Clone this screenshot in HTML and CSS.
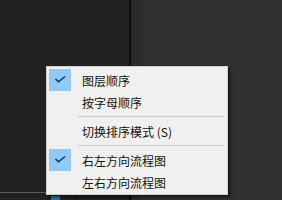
FILE: index.html
```html
<!DOCTYPE html>
<html lang="zh">
<head>
    <meta charset="UTF-8">
    <title>排序菜单</title>
    <link rel="stylesheet" href="styles.css">
</head>
<body>

<div class="workspace">
    <div class="panel-left">
        <div class="spacer"></div>
        <div class="bottom-line"></div>
        <div class="bottom-strip">
            <span class="chip"></span>
            <span class="tick"></span>
        </div>
    </div>
    <div class="divider"></div>
    <div class="band"></div>
    <div class="panel-right"></div>
</div>

<div class="menu">
    <div class="item">
        <span class="check on">
            <svg width="22" height="22" viewBox="0 0 22 22"><polyline points="6.5,10 9.5,12.8 16,7.5" fill="none" stroke="#1c3350" stroke-width="1.6"/></svg>
        </span>
        <span class="label">图层顺序</span>
    </div>
    <div class="item">
        <span class="check"></span>
        <span class="label">按字母顺序</span>
    </div>
    <div class="sep"></div>
    <div class="item">
        <span class="check"></span>
        <span class="label">切换排序模式 (S)</span>
    </div>
    <div class="sep"></div>
    <div class="item">
        <span class="check on">
            <svg width="22" height="22" viewBox="0 0 22 22"><polyline points="6.5,10 9.5,12.8 16,7.5" fill="none" stroke="#1c3350" stroke-width="1.6"/></svg>
        </span>
        <span class="label">右左方向流程图</span>
    </div>
    <div class="item">
        <span class="check"></span>
        <span class="label">左右方向流程图</span>
    </div>
</div>

</body>
</html>
```

FILE: styles.css
```css
/* fond sombre + menu contextuel */
body {
    margin: 0;
    width: 282px;
    height: 200px;
    overflow: hidden;
    background-color: #2f2f2f;
    font-family: "Noto Sans CJK SC", "Noto Sans", sans-serif;
}

.workspace {
    display: flex;
    height: 200px;
}

.panel-left {
    width: 129px;
    background-color: #222222;
    display: flex;
    flex-direction: column;
}

.spacer {
    flex: 1;
}

.bottom-line {
    height: 1px;
    background-color: #5c5c5c;
}

.bottom-strip {
    height: 7px;
    position: relative;
}

.chip {
    position: absolute;
    left: 51px;
    top: 3px;
    width: 9px;
    height: 4px;
    background-color: #2f6fb0;
}

.tick {
    position: absolute;
    left: 75px;
    top: 0;
    width: 1px;
    height: 7px;
    background-color: #111111;
}

.divider {
    width: 2px;
    background-color: #0c0c0c;
}

.band {
    width: 12px;
    background: linear-gradient(to right, #272727, #2b2b2b 40%, #2d2d2d);
}

.panel-right {
    flex: 1;
    background-color: #303030;
}

.menu {
    position: absolute;
    left: 46px;
    top: 66px;
    width: 182px;
    box-sizing: border-box;
    padding: 2px 0 1px 0;
    background-color: #f0f0f0;
    border: 1px solid #cfcfcf;
    box-shadow: 2px 2px 3px rgba(0, 0, 0, 0.55);
}

.item {
    display: flex;
    align-items: center;
    height: 22px;
    padding: 0 2px;
}

.check {
    width: 22px;
    height: 22px;
    margin-right: 11px;
    flex-shrink: 0;
}

.check.on {
    background-color: #91c9f7;
}

.check svg {
    display: block;
}

.label {
    font-size: 12px;
    color: #111111;
    white-space: nowrap;
}

.sep {
    height: 1px;
    margin: 3px 3px 3px 31px;
    background-color: #cdcdcd;
}
```
